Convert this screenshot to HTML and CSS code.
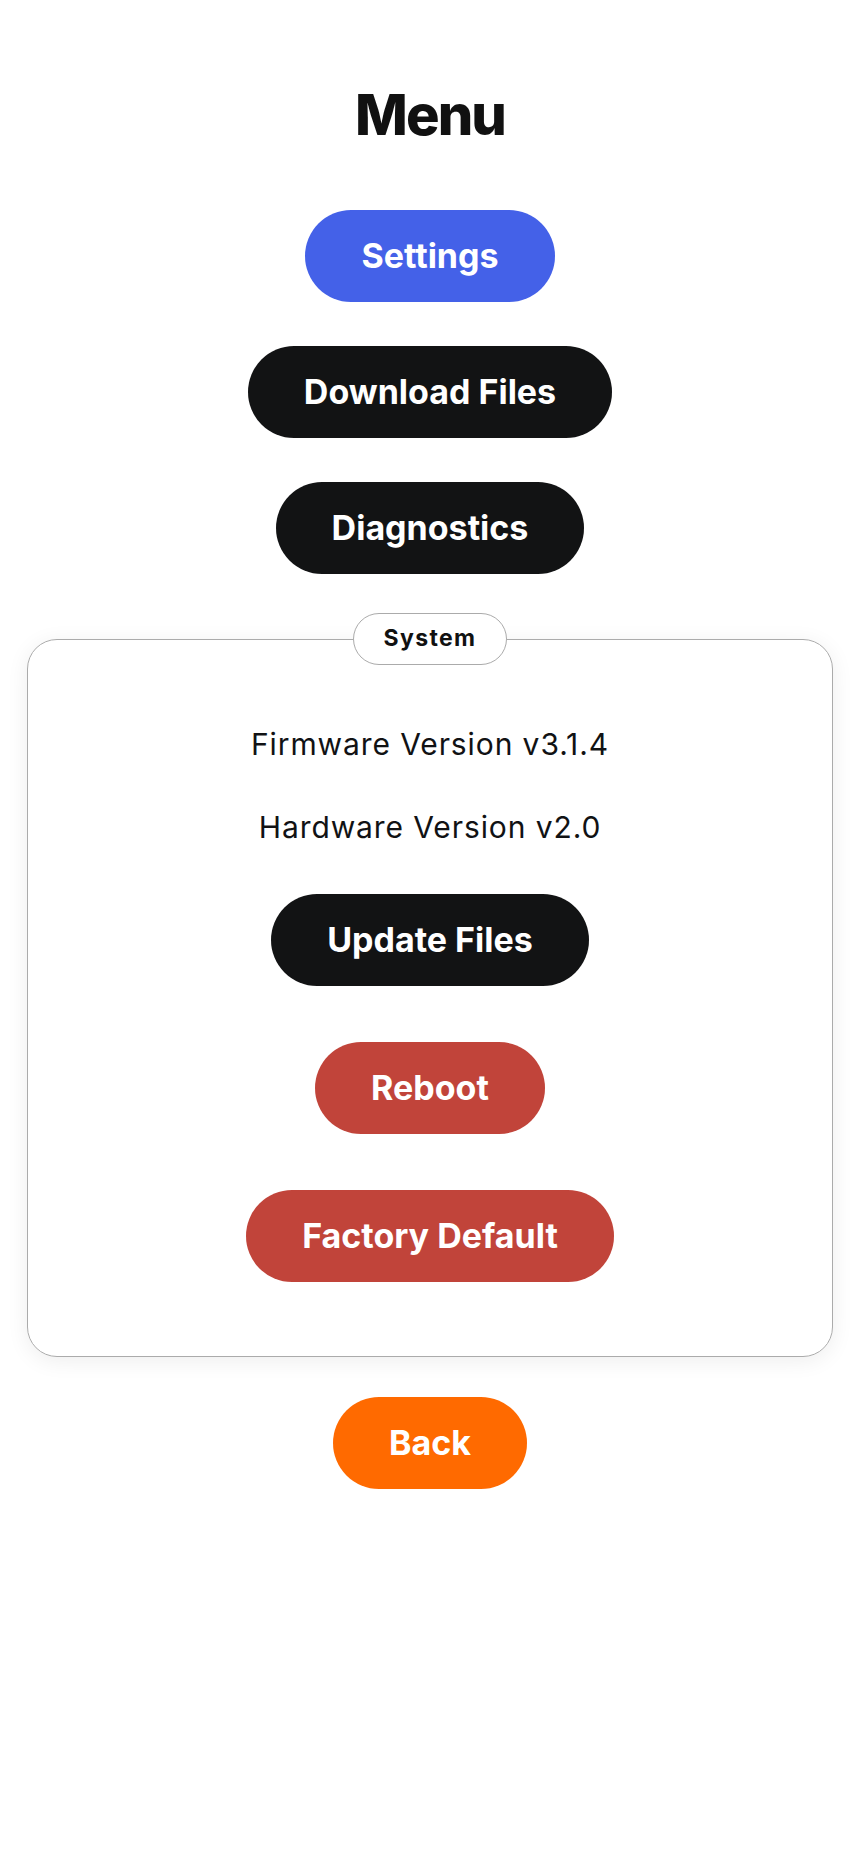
FILE: index.html
```html
<!DOCTYPE html>
<html lang="en">
<head>
<meta charset="utf-8">
<title>Menu</title>
<link rel="stylesheet" href="styles.css">
</head>
<body>
<main class="page">
  <h1 class="title">Menu</h1>
  <nav class="menu">
    <button class="btn btn-blue">Settings</button>
    <button class="btn btn-dark">Download Files</button>
    <button class="btn btn-dark">Diagnostics</button>
  </nav>
  <fieldset class="system">
    <legend class="system-legend">System</legend>
    <p class="info info-first">Firmware Version v3.1.4</p>
    <p class="info info-second">Hardware Version v2.0</p>
    <div class="system-actions">
      <button class="btn btn-dark">Update Files</button>
      <button class="btn btn-red">Reboot</button>
      <button class="btn btn-red">Factory Default</button>
    </div>
  </fieldset>
  <button class="btn btn-orange back">Back</button>
</main>
</body>
</html>
```
FILE: styles.css
```css
* { box-sizing: border-box; }
html, body { margin: 0; padding: 0; background: #ffffff; }
body {
  font-family: Inter, "Noto Sans", "Liberation Sans", sans-serif;
  color: #111214;
}
.page {
  display: flex;
  flex-direction: column;
  align-items: center;
  padding: 0 27px;
}
.title {
  margin: 82px 0 0;
  font-size: 56px;
  line-height: 67px;
  font-weight: 800;
  letter-spacing: -0.035em;
  color: #111111;
}
.menu {
  display: flex;
  flex-direction: column;
  align-items: center;
  gap: 44px;
  margin-top: 61px;
}
.btn {
  font-family: inherit;
  font-size: 34px;
  line-height: 40px;
  font-weight: 700;
  color: #ffffff;
  border: none;
  border-radius: 46px;
  padding: 26px 56px;
  cursor: pointer;
}
.btn-blue { background: #4461e8; }
.btn-dark { background: #121314; }
.btn-red { background: #c1443a; }
.btn-orange { background: #ff6a00; }
.system {
  align-self: stretch;
  margin: 39px 0 0;
  border: 1.5px solid #ababab;
  border-radius: 30px;
  padding: 57px 0 74px;
  box-shadow: 0 4px 22px rgba(0, 0, 0, 0.07);
  display: flex;
  flex-direction: column;
  align-items: center;
  min-width: 0;
}
.system-legend {
  margin: 0 auto;
  height: 52px;
  padding: 0 30px;
  border: 1.5px solid #ababab;
  border-radius: 26px;
  background: #ffffff;
  font-size: 23px;
  line-height: 49px;
  font-weight: 700;
  letter-spacing: 0.06em;
  color: #111111;
}
.info {
  margin: 0;
  font-size: 30px;
  line-height: 45px;
  font-weight: 400;
  letter-spacing: 0.03em;
  color: #111214;
  text-align: center;
}
.info-second { margin-top: 38px; }
.system-actions {
  display: flex;
  flex-direction: column;
  align-items: center;
  gap: 56px;
  margin-top: 44px;
}
.back { margin-top: 40px; }
```
